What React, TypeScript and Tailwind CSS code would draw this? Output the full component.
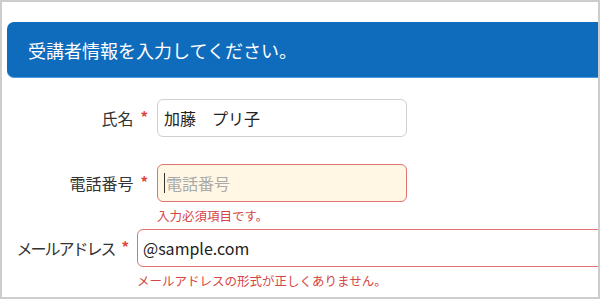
import React from "react";

const font = { fontFamily: '"Noto Sans CJK JP", "Noto Sans", sans-serif' };

function Req() {
  return <span className="ml-[7px] text-[15px] font-bold text-[#e0453c] relative top-[-1px]">*</span>;
}

export default function App() {
  return (
    <div className="w-[601px] h-[300px] bg-white" style={font}>
      <div className="w-[600px] h-[299px] border-2 border-[#cdcdcd] overflow-hidden flex flex-col">
        <div className="mt-[20px] ml-[5px] h-[56px] w-[600px] shrink-0 bg-[#0f6cbd] rounded-l-[7px] border-b border-[#4f9ae0] flex items-center pl-[21px]">
          <span className="text-white text-[18px] leading-none whitespace-nowrap">受講者情報を入力してください。</span>
        </div>

        <div className="mt-[21px] flex items-center">
          <div className="w-[155px] shrink-0 pr-[9px] flex justify-end items-center text-[16px] text-[#333] whitespace-nowrap">
            <span>氏名</span>
            <Req />
          </div>
          <div className="w-[250px] h-[38px] rounded-[6px] border border-[#d0d0d0] bg-white flex items-center px-[6px] text-[16px] text-[#222] shrink-0 whitespace-nowrap">
            加藤　プリ子
          </div>
        </div>

        <div className="mt-[27px] flex items-center">
          <div className="w-[155px] shrink-0 pr-[9px] flex justify-end items-center text-[16px] text-[#333] whitespace-nowrap">
            <span>電話番号</span>
            <Req />
          </div>
          <div className="w-[250px] h-[38px] rounded-[6px] border border-[#e27272] bg-[#fff7e3] flex items-center px-[6px] text-[16px] text-[#aaa] shrink-0 whitespace-nowrap">
            <span className="w-px h-[20px] bg-[#333] mr-[1px]" />
            電話番号
          </div>
        </div>
        <div className="ml-[155px] mt-[5px] text-[12.5px] leading-[18px] text-[#d64545] whitespace-nowrap">入力必須項目です。</div>

        <div className="mt-[4px] flex items-center">
          <div className="w-[135px] shrink-0 pr-[8px] flex justify-end items-center text-[16px] text-[#333] whitespace-nowrap">
            <span className="tracking-[-2px]">メールアドレス</span>
            <Req />
          </div>
          <div className="w-[520px] h-[38px] rounded-[6px] border border-[#e27272] bg-white flex items-center px-[5px] text-[16px] text-[#222] shrink-0 whitespace-nowrap">
            @sample.com
          </div>
        </div>
        <div className="ml-[135px] mt-[5px] text-[12.5px] leading-[18px] text-[#d64545] whitespace-nowrap">メールアドレスの形式が正しくありません。</div>
      </div>
    </div>
  );
}
